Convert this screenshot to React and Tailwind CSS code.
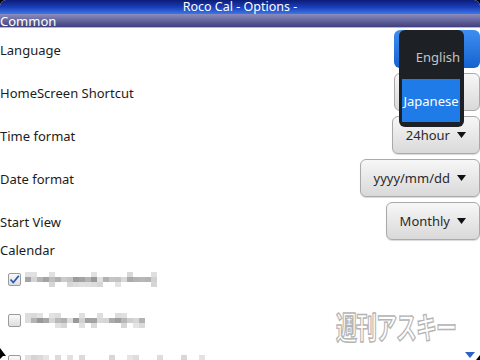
import React from "react";

const font = { fontFamily: '"Noto Sans", "DejaVu Sans", sans-serif' };

function Caret() {
  return (
    <svg width="9" height="6" viewBox="0 0 9 6" className="shrink-0">
      <path d="M0 0 L9 0 L4.5 6 Z" fill="#111" />
    </svg>
  );
}

function SelectButton({ label }) {
  return (
    <div className="h-[38px] flex items-center gap-[7px] pl-[13px] pr-[13px] rounded-[6px] border border-[#a9a9a9] bg-gradient-to-b from-[#f7f7f7] to-[#d9d9d9] shadow-[0_1px_1px_rgba(0,0,0,0.15)] text-[13px] text-[#2a2a2a]">
      <span className="pt-[2px]">{label}</span>
      <Caret />
    </div>
  );
}

function Row({ label, children }) {
  return (
    <div className="h-[38px] flex items-center justify-between">
      <span className="pt-[3px] text-[13px] text-[#1c1c1c]">{label}</span>
      {children}
    </div>
  );
}

// pixelated mosaic standing in for the blurred account names
function Mosaic({ cols, seed }) {
  const rows = [0, 1, 2];
  let s = seed;
  const rnd = () => {
    s = (s * 9301 + 49297) % 233280;
    return s / 233280;
  };
  return (
    <div className="flex flex-col">
      {rows.map((r) => (
        <div key={r} className="flex">
          {Array.from({ length: cols }).map((_, c) => {
            const v = rnd();
            let g;
            if (r === 1) g = 150 + Math.floor(v * 75);
            else g = v > 0.65 ? 180 + Math.floor(v * 50) : 255;
            return (
              <div
                key={c}
                className="w-[6px] h-[5px]"
                style={{ backgroundColor: `rgb(${g},${g},${g})` }}
              />
            );
          })}
        </div>
      ))}
    </div>
  );
}

function Checkbox({ checked }) {
  return (
    <div className="w-[13px] h-[13px] rounded-[2px] border border-[#9a9a9a] bg-gradient-to-b from-[#fafafa] to-[#dedede] flex items-center justify-center shrink-0">
      {checked && (
        <svg width="11" height="11" viewBox="0 0 11 11">
          <path d="M1.5 5.5 L4.3 8.5 L9.8 1.8" stroke="#2358b8" strokeWidth="1.8" fill="none" />
        </svg>
      )}
    </div>
  );
}

export default function App() {
  return (
    <div className="w-[480px] h-[360px] overflow-hidden bg-black relative" style={font}>
      <div className="h-full bg-white rounded-t-[6px] flex flex-col">
        {/* title bar */}
        <div className="h-[14px] rounded-t-[6px] bg-gradient-to-b from-[#0c1c78] via-[#1b3cb6] to-[#3b76e8] flex items-center justify-center text-white text-[12.5px] leading-[14px]">
          Roco Cal - Options -
        </div>
        {/* section header */}
        <div className="h-[14px] bg-gradient-to-b from-[#8c8cbc] to-[#40407e] border-b border-[#b8b8d4] flex items-center text-white text-[13px] leading-[14px]">
          Common
        </div>

        <div className="flex flex-col gap-[5px] pt-[2px]">
          <Row label="Language">
            <div className="h-[38px] w-[86px] rounded-[6px] bg-gradient-to-b from-[#3d8ef2] to-[#1463cf]" />
          </Row>
          <Row label="HomeScreen Shortcut">
            <div className="h-[38px] w-[86px] rounded-[6px] border border-[#a9a9a9] bg-gradient-to-b from-[#f7f7f7] to-[#d9d9d9]" />
          </Row>
          <Row label="Time format">
            <SelectButton label="24hour" />
          </Row>
          <Row label="Date format">
            <SelectButton label="yyyy/mm/dd" />
          </Row>
          <Row label="Start View">
            <SelectButton label="Monthly" />
          </Row>
        </div>

        <div className="mt-[1px] h-[18px] pt-[1px] flex items-center text-[13px] text-[#1c1c1c]">Calendar</div>

        <div className="flex flex-col pl-[8px]">
          <div className="h-[40px] flex items-center gap-[4px]">
            <Checkbox checked />
            <Mosaic cols={22} seed={17} />
          </div>
          <div className="h-[42px] flex items-center gap-[4px]">
            <Checkbox />
            <Mosaic cols={20} seed={91} />
          </div>
          <div className="h-[20px] flex items-start gap-[4px] pt-[14px]">
            <Checkbox />
            <Mosaic cols={30} seed={43} />
          </div>
        </div>
      </div>

      {/* language dropdown popup */}
      <div className="absolute left-[399px] top-[30px] w-[65px] h-[97px] rounded-[6px] bg-[#1d2126] flex flex-col items-end pr-[4px]">
        <div className="h-[49px] pt-[6px] flex items-center text-[13px] text-[#c4c4c4]">English</div>
        <div className="w-[58px] h-[43px] pt-[2px] bg-[#1f7be8] flex items-center justify-center text-[13px] text-white">
          Japanese
        </div>
      </div>

      {/* watermark */}
      <div
        className="absolute left-[336px] top-[311px] text-[21px] font-bold text-white scale-y-[1.45] origin-top tracking-[-1px] [-webkit-text-stroke:1px_#b4b4b4] leading-none"
        style={{ fontFamily: '"Noto Sans CJK JP", sans-serif' }}
      >
        週刊アスキー
      </div>

      {/* cursor */}
      <svg className="absolute left-0 top-[348px]" width="7" height="12" viewBox="0 0 7 12">
        <path d="M0 0 L0 11 L3 8 L6 8 Z" fill="#000" />
      </svg>

      {/* scroll hint */}
      <svg className="absolute left-[465px] top-[351px]" width="15" height="9" viewBox="0 0 15 9">
        <path d="M0 1 L10 1 L5 7 Z" fill="#2a62c8" />
        <path d="M11 9 L15 4 L15 9 Z" fill="#000" />
      </svg>
    </div>
  );
}
